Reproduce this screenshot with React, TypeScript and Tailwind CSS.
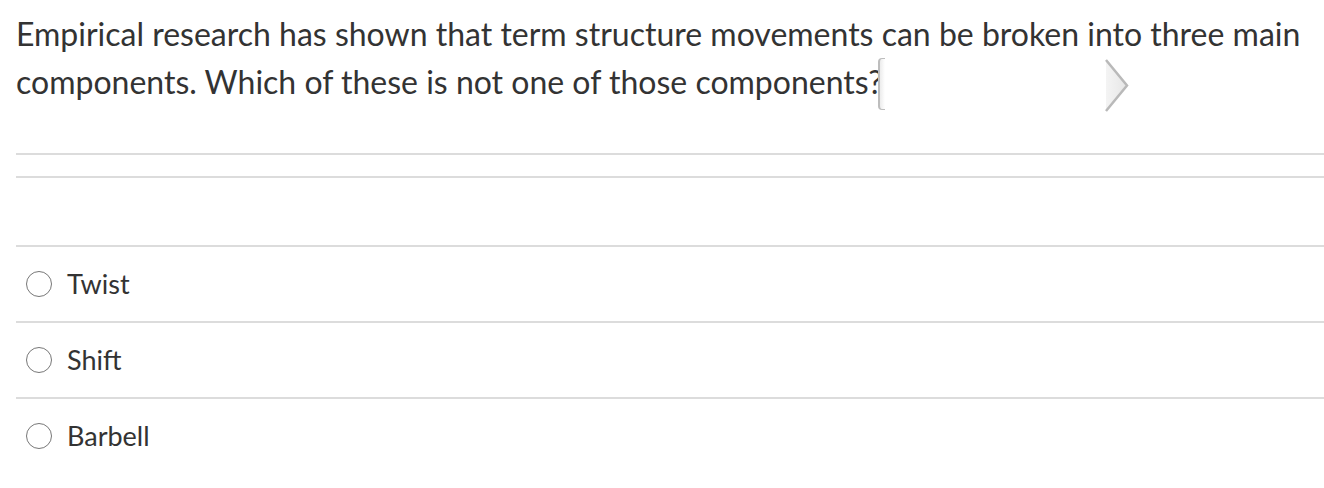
const OPTIONS = ["Twist", "Shift", "Barbell"]

function Chevron() {
    return (
        <svg width="26" height="55" viewBox="0 0 26 55" className="block">
            <defs>
                <linearGradient id="chev" x1="0" y1="0" x2="1" y2="0">
                    <stop offset="0" stopColor="#f4f4f4" />
                    <stop offset="1" stopColor="#e6e6e6" />
                </linearGradient>
            </defs>
            <path d="M2 2 L23 27.5 L2 53 Z" fill="url(#chev)" />
            <path d="M2 2 L23 27.5 L2 53" fill="none" stroke="#b9b9b9" strokeWidth="2.5" />
        </svg>
    )
}

export default function App() {
    return (
        <div className="w-[1324px] h-[488px] bg-white font-['Lato','Liberation_Sans',sans-serif]">
            <div className="pl-4 pr-2 pt-[10px] text-[32px] leading-[48px] text-[#333]">
                Empirical research has shown that term structure movements can be broken into three main components. Which of these is not one of those components?
                <span className="inline-flex align-top ml-[-5px] w-[252px] h-[55px] justify-between">
                    <span className="block w-[7px] h-[52px] border-l-[2px] border-t border-b border-[#bdbdbd] rounded-l-[4px] bg-gradient-to-r from-[#ececec] to-white" />
                    <Chevron />
                </span>
            </div>
            <div className="ml-4 mt-[40px] border-t-2 border-[#dcdcdc]" />
            <div className="ml-4 mt-[21px] border-t-2 border-[#dcdcdc]" />
            <div className="ml-4 mt-[67px]">
                {OPTIONS.map((opt) => (
                    <label key={opt} className="flex items-center h-[76px] border-t-2 border-[#dcdcdc] cursor-pointer">
                        <span className="ml-[10px] w-[26px] h-[26px] rounded-full border-[1.5px] border-[#777] shrink-0" />
                        <span className="ml-[15px] text-[27px] text-[#333]">{opt}</span>
                    </label>
                ))}
            </div>
        </div>
    )
}
